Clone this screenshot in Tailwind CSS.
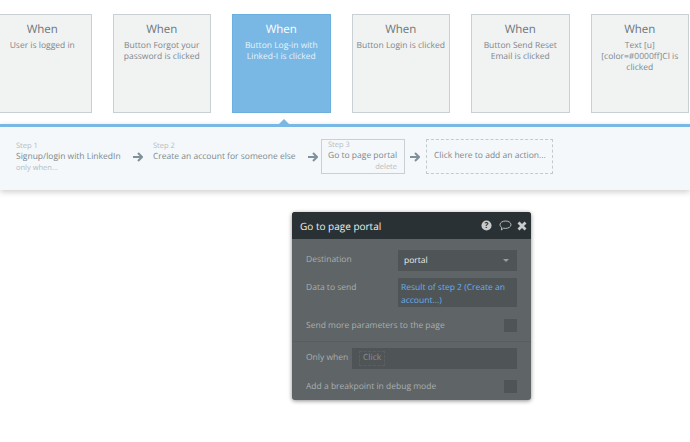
<!DOCTYPE html>
<html lang="en">
	<head>
		<meta charset="UTF-8" />
		<title>Workflow</title>
		<script src="https://cdn.jsdelivr.net/npm/@tailwindcss/browser@4"></script>
	</head>
	<body class="bg-white overflow-hidden font-['Open_Sans',sans-serif] [text-rendering:geometricPrecision]">
		<div class="w-[690px] h-[442px] overflow-hidden">
			<!-- EVENTS -->
			<div class="flex gap-[21px] ml-[-7px] pt-[14px] w-[720px] h-[123.5px] text-center">
				<div class="w-[98.5px] h-[99px] shrink-0 bg-[#f1f2f2] border border-[#c9d0d3] px-[6px] pt-[6px]">
					<p class="text-[11.5px] leading-[17px] text-[#6b767c]">When</p>
					<p class="text-[8.5px] leading-[11.2px] mt-[2px] text-[#7d888e]">User is logged in</p>
				</div>
				<div class="w-[98.5px] h-[99px] shrink-0 bg-[#f1f2f2] border border-[#c9d0d3] px-[6px] pt-[6px]">
					<p class="text-[11.5px] leading-[17px] text-[#6b767c]">When</p>
					<p class="text-[8.5px] leading-[11.2px] mt-[2px] text-[#7d888e]">Button Forgot your password is clicked</p>
				</div>
				<div class="w-[98.5px] h-[99px] shrink-0 bg-[#79b8e5] border border-[#6cb0e2] px-[6px] pt-[6px]">
					<p class="text-[11.5px] leading-[17px] text-white">When</p>
					<p class="text-[8.5px] leading-[11.2px] mt-[2px] text-[#e6f3fb]">Button Log-in with Linked-I is clicked</p>
				</div>
				<div class="w-[98.5px] h-[99px] shrink-0 bg-[#f1f2f2] border border-[#c9d0d3] px-[2px] pt-[6px]">
					<p class="text-[11.5px] leading-[17px] text-[#6b767c]">When</p>
					<p class="text-[8.5px] leading-[11.2px] mt-[2px] text-[#7d888e]">Button Login is clicked</p>
				</div>
				<div class="w-[98.5px] h-[99px] shrink-0 bg-[#f1f2f2] border border-[#c9d0d3] px-[6px] pt-[6px]">
					<p class="text-[11.5px] leading-[17px] text-[#6b767c]">When</p>
					<p class="text-[8.5px] leading-[11.2px] mt-[2px] text-[#7d888e]">Button Send Reset Email is clicked</p>
				</div>
				<div class="w-[98.5px] h-[99px] shrink-0 bg-[#f1f2f2] border border-[#c9d0d3] px-[6px] pt-[6px]">
					<p class="text-[11.5px] leading-[17px] text-[#6b767c]">When</p>
					<p class="text-[8.5px] leading-[11.2px] mt-[2px] text-[#7d888e]">Text [u] [color=#0000ff]Cl is clicked</p>
				</div>
			</div>

			<!-- ACTION BAR -->
			<div class="relative h-[66px] bg-[#f4f8fa] border-t-[3px] border-[#79b8e5] shadow-[0_2px_6px_rgba(0,0,0,0.2)] flex items-center pl-[16px] pb-[3px]">
				<div class="absolute left-[279px] top-[-8px] w-0 h-0 border-l-[5px] border-r-[5px] border-b-[5px] border-l-transparent border-r-transparent border-b-[#79b8e5]"></div>
				<div class="w-[104px] shrink-0">
					<p class="text-[7.5px] leading-[10px] text-[#b4bbbf]">Step 1</p>
					<p class="text-[8.5px] leading-[11px] text-[#7d888e] whitespace-nowrap">Signup/login with LinkedIn</p>
					<p class="text-[7.5px] leading-[10px] mt-[1px] text-[#b4bbbf]">only when...</p>
				</div>
				<svg class="ml-[13px] w-[10px] h-[10px] shrink-0" viewBox="0 0 10 10" fill="none" stroke="#7f929c" stroke-width="2">
					<path d="M0 5h8.5M5 1l4 4-4 4" />
				</svg>
				<div class="ml-[10px] w-[142px] shrink-0 mt-[-11px]">
					<p class="text-[7.5px] leading-[10px] text-[#b4bbbf]">Step 2</p>
					<p class="text-[8.5px] leading-[11px] text-[#7d888e] whitespace-nowrap">Create an account for someone else</p>
				</div>
				<svg class="ml-[13px] w-[10px] h-[10px] shrink-0" viewBox="0 0 10 10" fill="none" stroke="#7f929c" stroke-width="2">
					<path d="M0 5h8.5M5 1l4 4-4 4" />
				</svg>
				<div class="ml-[3px] w-[84px] h-[35px] shrink-0 border border-[#c9d0d3] pl-[6px] pr-[7px]">
					<p class="text-[7.5px] leading-[10px] text-[#b4bbbf]">Step 3</p>
					<p class="text-[8.5px] leading-[11px] text-[#7d888e] whitespace-nowrap">Go to page portal</p>
					<p class="text-[7.5px] leading-[10px] mt-[1px] text-right text-[#b4bbbf]">delete</p>
				</div>
				<svg class="ml-[5px] w-[10px] h-[10px] shrink-0" viewBox="0 0 10 10" fill="none" stroke="#7f929c" stroke-width="2">
					<path d="M0 5h8.5M5 1l4 4-4 4" />
				</svg>
				<div class="ml-[6px] w-[127px] h-[35px] shrink-0 border border-dashed border-[#c3cacd] flex items-center pl-[7px]">
					<p class="text-[8.5px] text-[#7d888e] whitespace-nowrap">Click here to add an action...</p>
				</div>
			</div>

			<!-- PROPERTY EDITOR -->
			<div class="ml-[292px] mt-[22.500px] w-[239px] h-[188px] rounded-[3px] overflow-hidden bg-[#5f6567] shadow-[0_1px_4px_rgba(0,0,0,0.45)]">
				<div class="h-[27px] bg-[#2a3134] flex items-center pl-[8px] pr-[4px]">
					<span class="text-[10px] pt-[1px] text-[#eef0f0]">Go to page portal</span>
					<svg class="ml-auto w-[11px] h-[11px]" viewBox="0 0 12 12">
						<circle cx="6" cy="6" r="5.5" fill="#c9cccd" />
						<text x="6" y="9.2" text-anchor="middle" font-size="9" font-weight="700" fill="#2a3134">?</text>
					</svg>
					<svg class="ml-[7px] w-[13px] h-[11px]" viewBox="0 0 13 11" fill="none" stroke="#c9cccd" stroke-width="0.9">
						<path d="M6.500 1c3 0 5.500 1.600 5.500 3.700S9.500 8.400 6.500 8.400c-.7 0-1.300-.1-1.900-.2L2.300 10l.5-2.500C1.700 6.900 1 5.900 1 4.700 1 2.600 3.500 1 6.500 1Z" />
					</svg>
					<svg class="ml-[5px] w-[10px] h-[10px]" viewBox="0 0 10 10" fill="none" stroke="#c9cccd" stroke-width="2.8">
						<path d="M1.500 1.500l7 7M8.500 1.500l-7 7" />
					</svg>
				</div>
				<div class="flex items-center mt-[11px] pl-[14px] pr-[14px]">
					<span class="w-[92px] text-[8.5px] text-[#a9aeb0]">Destination</span>
					<div class="w-[119px] h-[21px] bg-[#4f5557] flex items-center pl-[6px] pr-[8px]">
						<span class="text-[8.5px] pt-[2px] text-[#e8eaea]">portal</span>
						<span class="ml-auto w-0 h-0 border-l-[3px] border-r-[3px] border-t-[3px] border-l-transparent border-r-transparent border-t-[#999ea0]"></span>
					</div>
				</div>
				<div class="flex mt-[7px] pl-[14px] pr-[14px]">
					<span class="w-[92px] text-[8.5px] leading-[12px] pt-[4px] text-[#a9aeb0]">Data to send</span>
					<div class="w-[119px] h-[29px] bg-[#4f5557] pl-[3px] pt-[3px] text-[8.5px] leading-[13px] text-[#6aaeea]">Result of step 2 (Create an account...)</div>
				</div>
				<div class="flex items-center justify-between h-[33px] mt-[2px] pl-[14px] pr-[14px] border-b border-[#585e60]">
					<span class="text-[8.5px] pt-[2px] text-[#a9aeb0]">Send more parameters to the page</span>
					<span class="w-[13px] h-[13px] bg-[#4f5557]"></span>
				</div>
				<div class="flex items-center mt-[6px] pl-[14px] pr-[14px]">
					<span class="w-[46px] text-[8.5px] text-[#a9aeb0] shrink-0">Only when</span>
					<div class="w-[165px] h-[21px] bg-[#4f5557] flex items-center pl-[7px]">
						<span class="text-[8.5px] px-[3px] border border-dashed border-[#5a6062] text-[#8c9193]">Click</span>
					</div>
				</div>
				<div class="flex items-center justify-between mt-[10px] pl-[14px] pr-[14px]">
					<span class="text-[8.5px] pt-[2px] text-[#a9aeb0]">Add a breakpoint in debug mode</span>
					<span class="w-[13px] h-[13px] bg-[#4f5557]"></span>
				</div>
			</div>
		</div>
	</body>
</html>
